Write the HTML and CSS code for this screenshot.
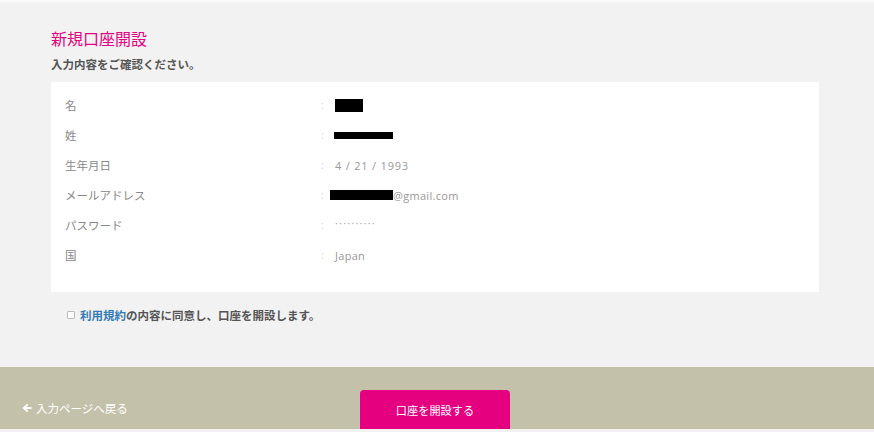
FILE: index.html
```html
<!DOCTYPE html>
<html lang="ja">
<head>
<meta charset="utf-8">
<title>新規口座開設</title>
<link rel="stylesheet" href="styles.css">
</head>
<body>
<div class="topline"></div>
<main class="main">
  <h1 class="title">新規口座開設</h1>
  <p class="lead">入力内容をご確認ください。</p>
  <div class="card">
    <div class="row"><span class="label">名</span><span class="colon">:</span><span class="value"><span class="redact r1"></span></span></div>
    <div class="row"><span class="label">姓</span><span class="colon">:</span><span class="value"><span class="redact r2"></span></span></div>
    <div class="row"><span class="label">生年月日</span><span class="colon">:</span><span class="value date">4 / 21 / 1993</span></div>
    <div class="row"><span class="label">メールアドレス</span><span class="colon">:</span><span class="value email"><span class="redact r3"></span>@gmail.com</span></div>
    <div class="row"><span class="label">パスワード</span><span class="colon">:</span><span class="value pw">··········</span></div>
    <div class="row"><span class="label">国</span><span class="colon">:</span><span class="value">Japan</span></div>
  </div>
  <label class="agree"><span class="box"></span><a class="link" href="#">利用規約</a>の内容に同意し、口座を開設します。</label>
</main>
<footer class="footer">
  <a class="back" href="#"><svg class="arrow" viewBox="0 0 10 10" width="10" height="10"><path d="M0.5 5 L5 0.8 L6.3 2.1 L4.2 4.1 L9.5 4.1 L9.5 5.9 L4.2 5.9 L6.3 7.9 L5 9.2 Z" fill="#fff"/></svg>入力ページへ戻る</a>
  <div class="btnwrap"><button class="submit">口座を開設する</button></div>
  <div></div>
</footer>
<div class="bottomline"></div>
</body>
</html>
```
FILE: styles.css
```css
html, body {
  margin: 0;
  padding: 0;
}
body {
  background: #f2f2f2;
  font-family: "Noto Sans CJK JP", "Open Sans", sans-serif;
  width: 874px;
  height: 432px;
  overflow: hidden;
}
.topline {
  height: 2px;
  background: #fafafa;
}
.main {
  padding: 25px 0 0 51px;
  height: 365px;
  box-sizing: border-box;
}
.title {
  margin: 0;
  font-size: 16px;
  line-height: 22px;
  font-weight: normal;
  color: #e4007f;
}
.lead {
  margin: 8px 0 0;
  font-size: 11.5px;
  line-height: 14px;
  font-weight: bold;
  color: #555;
}
.card {
  margin-top: 11px;
  width: 768px;
  height: 210px;
  box-sizing: border-box;
  background: #fff;
  padding: 8px 0 0 14px;
}
.row {
  display: flex;
  align-items: center;
  height: 30px;
  font-size: 11.5px;
}
.label {
  width: 256px;
  color: #888;
}
.colon {
  width: 14px;
  color: #d0d0d0;
  font-family: "Open Sans", sans-serif;
  font-size: 10px;
}
.value {
  color: #999;
  font-family: "Open Sans", sans-serif;
  font-size: 11px;
  letter-spacing: 0.3px;
  display: flex;
  align-items: center;
}
.date {
  letter-spacing: 0.8px;
}
.email {
  margin-left: -5px;
}
.pw {
  font-size: 11px;
  letter-spacing: 1.2px;
  color: #aaa;
  position: relative;
  top: -3px;
}
.redact {
  display: inline-block;
  background: #000;
}
.r1 { width: 28px; height: 13px; }
.r2 { width: 59px; height: 7px; margin-left: -1px; }
.r3 { width: 63px; height: 10px; }
.agree {
  display: flex;
  align-items: center;
  margin: 15px 0 0 16px;
  font-size: 11.5px;
  font-weight: bold;
  color: #555;
}
.box {
  width: 6px;
  height: 6px;
  border: 1px solid #bbb;
  border-radius: 1px;
  background: #fff;
  margin-right: 5px;
}
.link {
  color: #337ab7;
  text-decoration: none;
}
.footer {
  height: 62px;
  background: #c4c1ab;
  display: grid;
  grid-template-columns: 1fr 150px 1fr;
  overflow: hidden;
}
.back {
  display: flex;
  align-items: center;
  gap: 4px;
  padding: 34px 0 0 22px;
  height: 14px;
  color: #fff;
  font-size: 11.5px;
  text-decoration: none;
}
.arrow {
  flex: none;
}
.btnwrap {
  padding-top: 23px;
  margin-left: -2px;
}
.submit {
  width: 150px;
  height: 46px;
  border: none;
  border-radius: 4px;
  background: #e4007f;
  color: #fff;
  font-family: "Noto Sans CJK JP", sans-serif;
  font-size: 11.2px;
  padding: 0 0 6px;
}
.bottomline {
  height: 3px;
  background: #f2f2f2;
}
```
